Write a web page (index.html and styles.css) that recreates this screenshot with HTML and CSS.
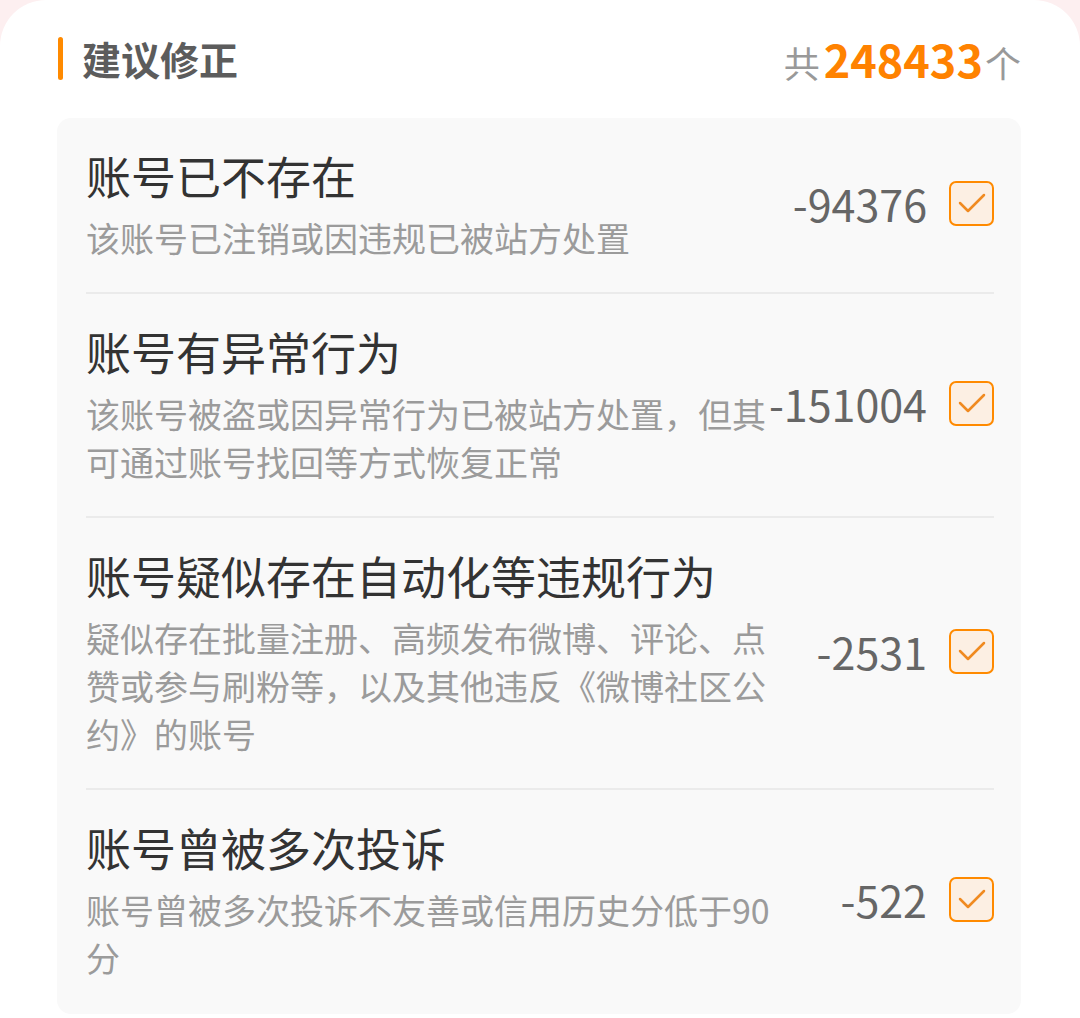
FILE: index.html
```html
<!DOCTYPE html>
<html lang="zh-CN">
<head>
  <meta charset="UTF-8">
  <title>建议修正</title>
  <link rel="stylesheet" href="styles.css">
</head>
<body>
  <div class="panel">

    <div class="head">
      <h2 class="head-title">建议修正</h2>
      <div class="head-count">共<b>248433</b>个</div>
    </div>

    <ul class="list">
      <li class="item">
        <div class="item-text">
          <div class="item-title">账号已不存在</div>
          <div class="item-desc">该账号已注销或因违规已被站方处置</div>
        </div>
        <div class="item-side">
          <span class="item-num">-94376</span>
          <span class="check"><svg viewBox="0 0 45 45"><polyline points="11,22 19,30 35,14" /></svg></span>
        </div>
      </li>
      <li class="item">
        <div class="item-text">
          <div class="item-title">账号有异常行为</div>
          <div class="item-desc">该账号被盗或因异常行为已被站方处置，但其可通过账号找回等方式恢复正常</div>
        </div>
        <div class="item-side">
          <span class="item-num">-151004</span>
          <span class="check"><svg viewBox="0 0 45 45"><polyline points="11,22 19,30 35,14" /></svg></span>
        </div>
      </li>
      <li class="item">
        <div class="item-text">
          <div class="item-title">账号疑似存在自动化等违规行为</div>
          <div class="item-desc">疑似存在批量注册、高频发布微博、评论、点赞或参与刷粉等，以及其他违反《微博社区公约》的账号</div>
        </div>
        <div class="item-side">
          <span class="item-num">-2531</span>
          <span class="check"><svg viewBox="0 0 45 45"><polyline points="11,22 19,30 35,14" /></svg></span>
        </div>
      </li>
      <li class="item">
        <div class="item-text">
          <div class="item-title">账号曾被多次投诉</div>
          <div class="item-desc">账号曾被多次投诉不友善或信用历史分低于90分</div>
        </div>
        <div class="item-side">
          <span class="item-num">-522</span>
          <span class="check"><svg viewBox="0 0 45 45"><polyline points="11,22 19,30 35,14" /></svg></span>
        </div>
      </li>
    </ul>

  </div>
</body>
</html>
```

FILE: styles.css
```css
body {
  margin: 0;
  background: #fdeff0;
  font-family: "Noto Sans CJK SC", "Noto Sans", sans-serif;
}

.panel {
  background: #ffffff;
  border-radius: 46px 46px 0 0;
  padding: 0 59px 4px 57px;
  min-height: 1014px;
}

.head {
  height: 116px;
  margin-bottom: 2px;
  display: flex;
  align-items: center;
  justify-content: space-between;
}

.head-title {
  margin: 0;
  display: flex;
  align-items: center;
  gap: 19px;
  font-size: 39px;
  font-weight: bold;
  color: #5c5c5c;
  padding-left: 1px;
}

.head-title::before {
  content: "";
  width: 5px;
  height: 43px;
  border-radius: 3px;
  background: #ff8a00;
}

.head-count {
  font-size: 36px;
  color: #999;
}

.head-count b {
  font-size: 45px;
  color: #ff8200;
  margin: 0 2px 0 4px;
}

.list {
  list-style: none;
  margin: 0;
  padding: 0 27px 0 29px;
  background: #f9f9f9;
  border-radius: 14px;
}

.item {
  display: flex;
  align-items: center;
  padding: 26px 0 30px 0;
  border-bottom: 2px solid #ebebeb;
}

.item:last-child {
  border-bottom: none;
  padding-bottom: 32px;
}

.item-text {
  flex: 0 1 690px;
  min-width: 0;
}

.item-title {
  font-size: 45px;
  line-height: 64px;
  color: #333;
}

.item-desc {
  margin-top: 6px;
  font-size: 34px;
  line-height: 48px;
  color: #9b9b9b;
}

.item-side {
  flex: 1 0 auto;
  display: flex;
  align-items: center;
  justify-content: flex-end;
  gap: 22px;
}

.item-num {
  font-size: 43px;
  color: #666;
  white-space: nowrap;
}

.check {
  flex: 0 0 45px;
  width: 45px;
  height: 45px;
  box-sizing: border-box;
  border: 2px solid #ff8a00;
  border-radius: 7px;
  background: #fcefe3;
  position: relative;
}

.check svg {
  position: absolute;
  top: -2px;
  left: -2px;
  width: 45px;
  height: 45px;
}

.check polyline {
  fill: none;
  stroke: #f08a20;
  stroke-width: 2.5;
  stroke-linecap: round;
  stroke-linejoin: round;
}
```
